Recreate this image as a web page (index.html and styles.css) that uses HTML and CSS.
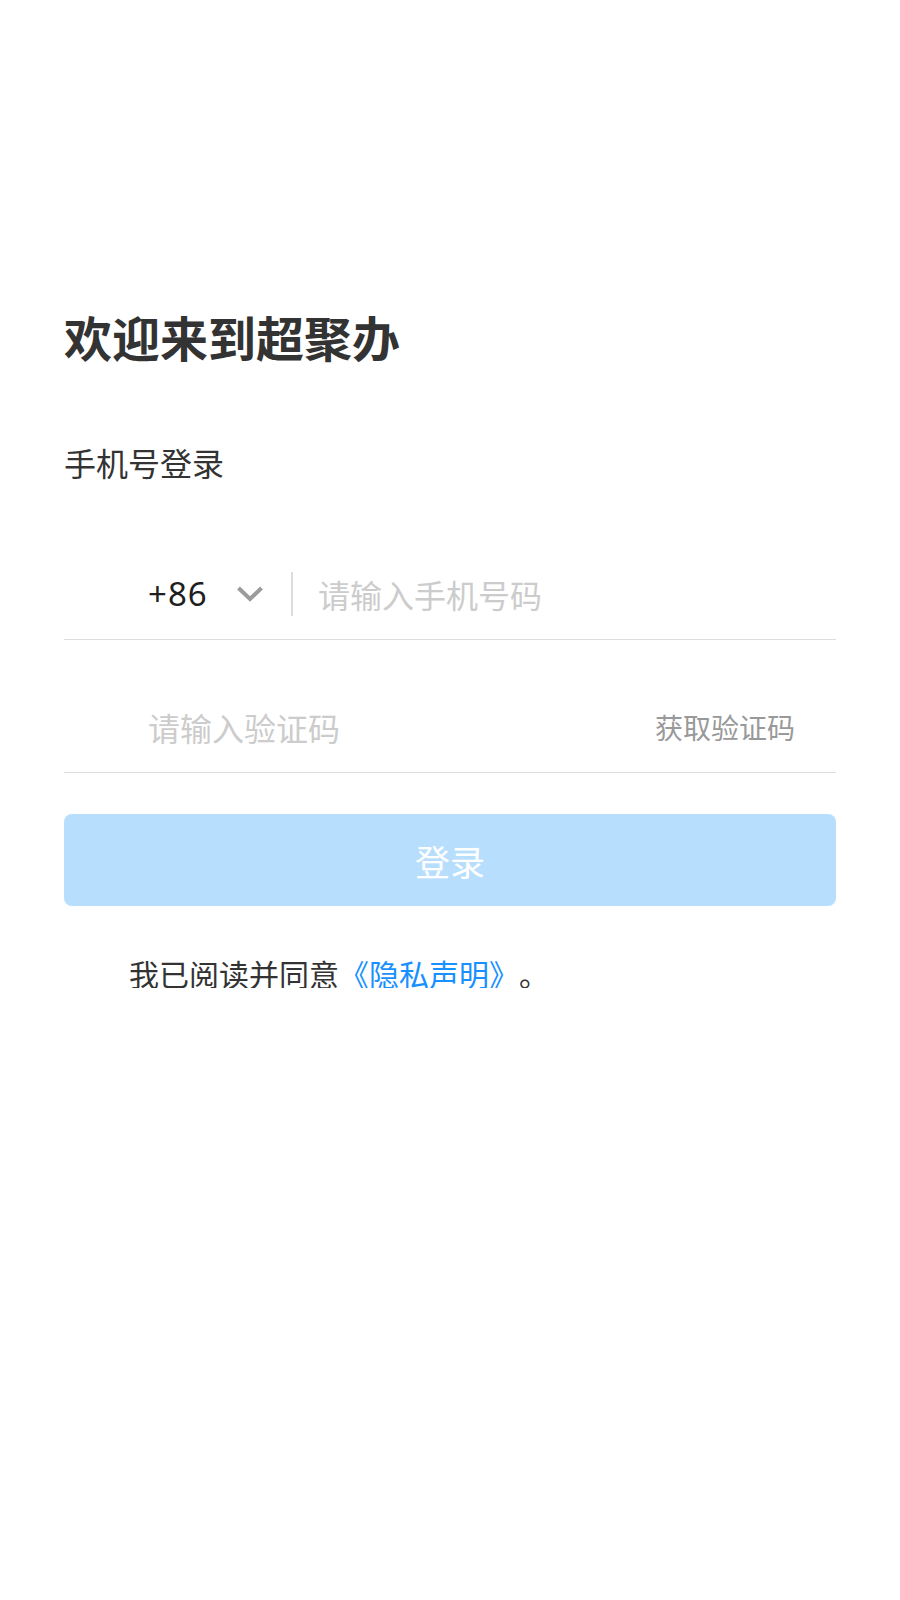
FILE: index.html
```html
<!DOCTYPE html>
<html lang="zh-CN">
<head>
<meta charset="utf-8">
<title>欢迎来到超聚办</title>
<link rel="stylesheet" href="styles.css">
</head>
<body>
<main class="page">
  <h1 class="title">欢迎来到超聚办</h1>
  <div class="subtitle">手机号登录</div>

  <div class="field field-phone">
    <span class="code">+86</span>
    <svg class="chevron" width="28" height="18" viewBox="0 0 28 18" aria-hidden="true">
      <polyline points="2.5,3 14,14 25.5,3" fill="none" stroke="#9b9b9b" stroke-width="4"/>
    </svg>
    <span class="divider"></span>
    <span class="placeholder">请输入手机号码</span>
  </div>

  <div class="field field-code">
    <span class="placeholder">请输入验证码</span>
    <span class="get-code">获取验证码</span>
  </div>

  <button class="login" type="button">登录</button>

  <p class="agree">我已阅读并同意<a class="link" href="#">《隐私声明》</a>。</p>
</main>
</body>
</html>
```

FILE: styles.css
```css
html, body {
  margin: 0;
  padding: 0;
  background: #ffffff;
}

body {
  font-family: "Noto Sans CJK SC", "Noto Sans", sans-serif;
  color: #333333;
  text-spacing-trim: space-all;
}

.page {
  padding: 312px 64px 0 64px;
}

.title {
  margin: 0;
  font-size: 48px;
  line-height: 48px;
  font-weight: 700;
  color: #333333;
}

.subtitle {
  margin-top: 86px;
  font-size: 32px;
  line-height: 32px;
  color: #333333;
}

.field {
  display: flex;
  align-items: center;
  height: 90px;
  border-bottom: 1px solid #dddddd;
  padding-left: 84px;
}

.field-phone {
  margin-top: 71px;
}

.field-code {
  margin-top: 42px;
  padding-right: 41px;
  justify-content: space-between;
}

.code {
  flex: 0 0 60px;
  font-family: "Noto Sans", "Open Sans", sans-serif;
  font-size: 33px;
  line-height: 40px;
  letter-spacing: 1px;
  color: #1f1f1f;
  white-space: nowrap;
}

.chevron {
  display: block;
  flex: 0 0 auto;
  margin-left: 28px;
}

.divider {
  flex: 0 0 2px;
  height: 44px;
  background: #dddddd;
  margin-left: 27px;
  margin-right: 25px;
}

.placeholder {
  font-size: 32px;
  line-height: 40px;
  color: #cccccc;
}

.get-code {
  font-size: 28px;
  line-height: 36px;
  color: #999999;
}

.login {
  display: block;
  width: 100%;
  height: 92px;
  margin-top: 41px;
  border: none;
  border-radius: 8px;
  background: #b8defd;
  color: #ffffff;
  font-family: inherit;
  font-size: 35px;
  padding: 0;
}

.agree {
  margin: 52px 0 0 0;
  padding-left: 65px;
  font-size: 30px;
  line-height: 30px;
  color: #333333;
}

.link {
  color: #1890ff;
  text-decoration: none;
}
```
